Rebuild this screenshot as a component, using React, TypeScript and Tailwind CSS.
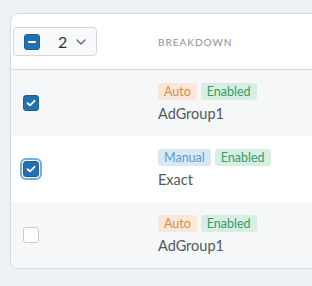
import { ChevronDown } from "lucide-react";

type Row = {
    type: "Auto" | "Manual";
    name: string;
    checked: boolean;
    focused?: boolean;
};

const rows: Row[] = [
    { type: "Auto", name: "AdGroup1", checked: true },
    { type: "Manual", name: "Exact", checked: true, focused: true },
    { type: "Auto", name: "AdGroup1", checked: false },
];

const Check = ({ checked, focused }: { checked: boolean; focused?: boolean }) => (
    <div
        className={`flex h-4 w-4 items-center justify-center rounded-[3px] border ${
            checked ? "border-[#1d5f96] bg-[#2271b1]" : "border-[#c9cdd2] bg-white"
        } ${focused ? "outline-2 outline-offset-1 outline-[#72aee6]" : ""}`}
    >
        {checked && (
            <svg width="10" height="8" viewBox="0 0 10 8" fill="none">
                <path d="M1.5 4.2 L4 6.3 L8.5 1.8" stroke="white" strokeWidth="1.8" strokeLinecap="round" strokeLinejoin="round" />
            </svg>
        )}
    </div>
);

const Badge = ({ label }: { label: string }) => {
    const styles: Record<string, string> = {
        Auto: "bg-[#f9e8da] text-[#d98a4c]",
        Manual: "bg-[#d9e8f5] text-[#5a9bd2]",
        Enabled: "bg-[#d6efe2] text-[#3c9a6b]",
    };
    return (
        <span className={`rounded-[3px] px-[6px] text-[12.5px] leading-[17px] ${styles[label]}`}>
            {label}
        </span>
    );
};

export default function App() {
    return (
        <div className="h-[286px] w-[312px] overflow-hidden bg-[#edf0f4] pl-[10px] pt-[13px] font-['Lato',sans-serif]">
            <div className="w-[330px] overflow-hidden rounded-l-[8px] border border-[#d6dadf] bg-white">
                <div className="grid h-[56px] grid-cols-[137px_1fr] items-center border-b border-[#d6dadf]">
                    <div className="pl-[2px]">
                        <div className="flex h-[29px] w-[84px] items-center rounded-[4px] border border-[#d3d7dc] bg-[#f8f9fa] pl-[10px]">
                            <div className="flex h-4 w-4 items-center justify-center rounded-[3px] border border-[#1d5f96] bg-[#2271b1]">
                                <div className="h-[2px] w-[8px] rounded bg-white" />
                            </div>
                            <span className="ml-[18px] text-[16px] text-[#2c3338]">2</span>
                            <ChevronDown className="ml-[6px] text-[#6b7178]" size={16} strokeWidth={2.2} />
                        </div>
                    </div>
                    <div className="pl-[10px] pt-[1px] text-[10px] tracking-[1px] text-[#8c9096]">BREAKDOWN</div>
                </div>
                {rows.map((row, index) => (
                    <div
                        key={index}
                        className={`grid h-[66px] grid-cols-[137px_1fr] items-center ${
                            index % 2 === 0 ? "bg-[#f6f7f9]" : "bg-white"
                        }`}
                    >
                        <div className="pl-[12px]">
                            <Check checked={row.checked} focused={row.focused} />
                        </div>
                        <div className="flex flex-col gap-[5px] pl-[10px]">
                            <div className="flex gap-[4px]">
                                <Badge label={row.type} />
                                <Badge label="Enabled" />
                            </div>
                            <div className="text-[14.5px] leading-[18px] text-[#50575e]">{row.name}</div>
                        </div>
                    </div>
                ))}
            </div>
        </div>
    );
}
